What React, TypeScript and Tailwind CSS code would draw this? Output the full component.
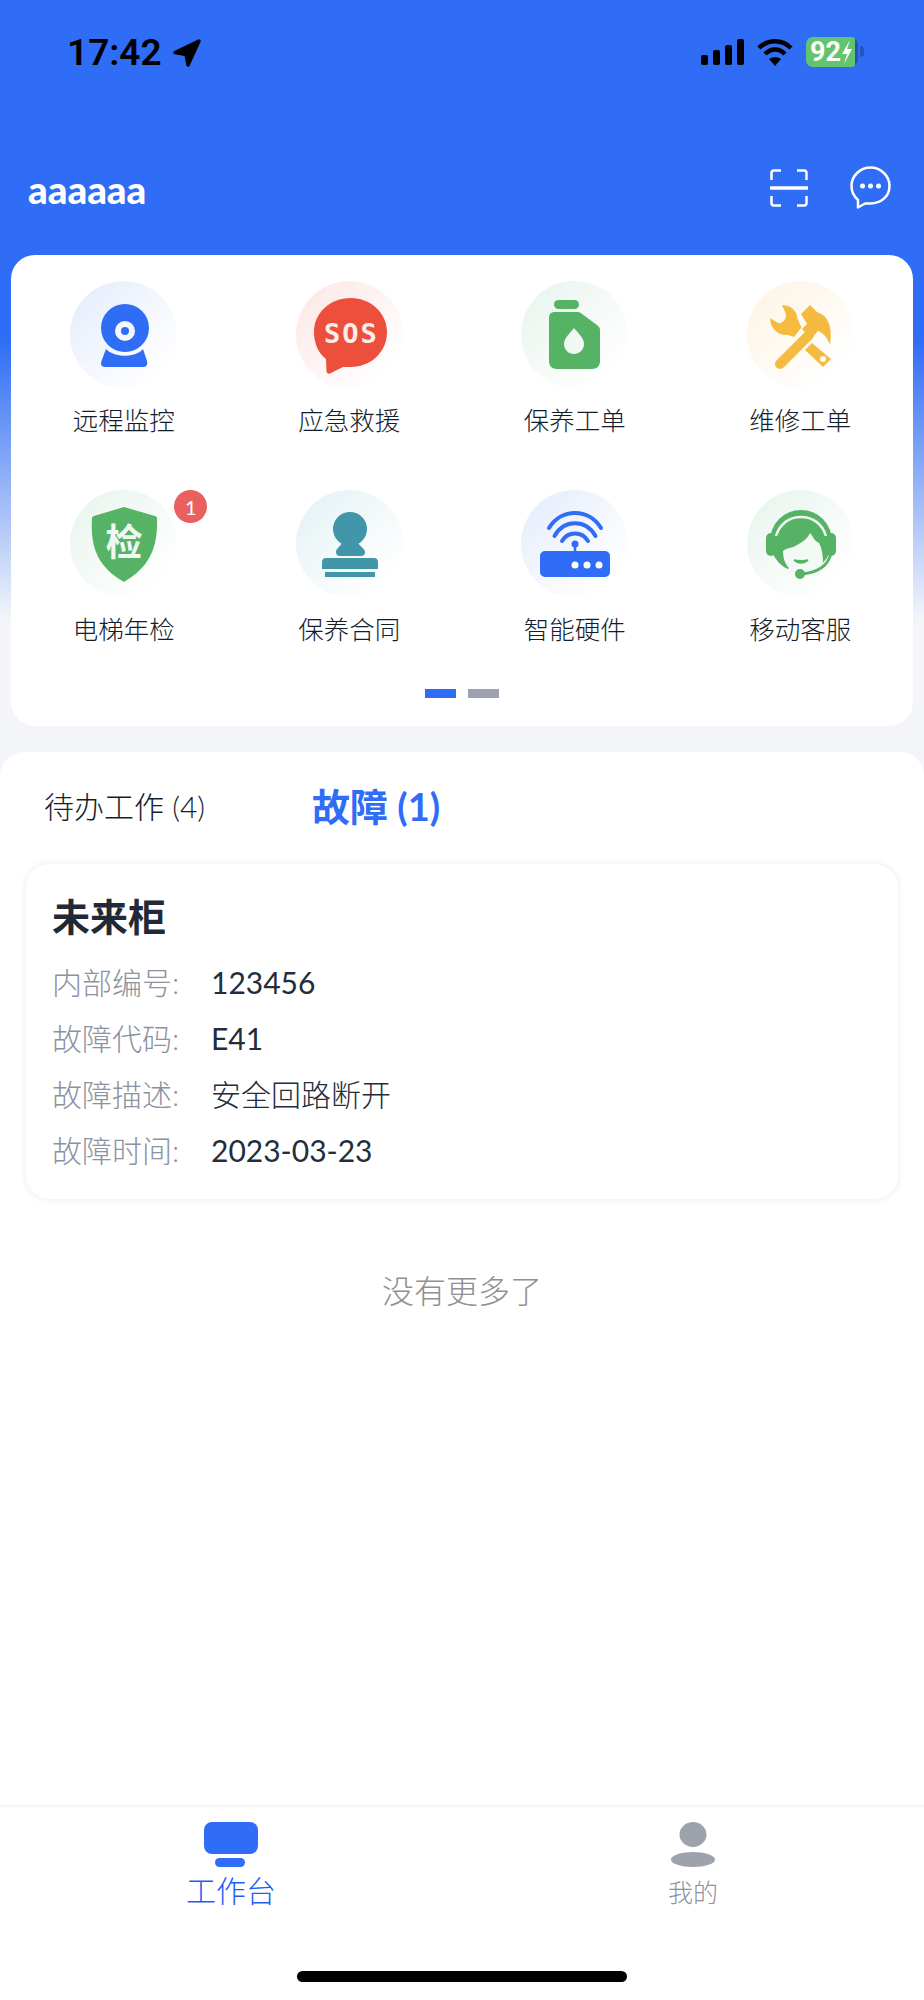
import type { ReactNode } from "react";

const FONT = "font-['Lato','Noto_Sans_CJK_SC',sans-serif]";

function CameraIcon() {
  return (
    <svg viewBox="0 0 107 107" className="h-full w-full">
      <circle cx="55" cy="47" r="24" fill="#2f6df6" />
      <circle cx="55" cy="50" r="10" fill="#f4f7fe" />
      <circle cx="55" cy="50" r="4" fill="#2f6df6" />
      <path
        d="M36 68 C44 77 66 77 73 68 L77 80 C78 84 76 86 73 86 L36 86 C32 86 30 84 31.500 80 Z"
        fill="#2f6df6"
      />
    </svg>
  );
}

function SosIcon() {
  return (
    <svg viewBox="0 0 107 107" className="h-full w-full">
      <path
        d="M54.500 17 C75 17 91 32 91 51 C91 71 75 86 54.500 86 L47 86 L34 92.500 C32 93 30.500 92 30.500 90 L30 78 C22 72 18 62 18 51 C18 32 34 17 54.500 17 Z"
        fill="#ec503c"
      />
      <text
        x="55.500"
        y="62"
        textAnchor="middle"
        fill="#fbeeea"
        fontSize="27"
        fontWeight="700"
        letterSpacing="2"
        fontFamily="'DejaVu Sans Mono', monospace"
      >
        SOS
      </text>
    </svg>
  );
}

function BottleIcon() {
  return (
    <svg viewBox="0 0 107 107" className="h-full w-full">
      <rect x="33" y="19" width="25" height="9" rx="4.500" fill="#56b366" />
      <path
        d="M34 31 L56 31 C58 31 59.500 31.500 61 33 L76 44 C78 45.500 79 47 79 49 L79 80 C79 85 76 88 71 88 L36 88 C31 88 28 85 28 80 L28 37 C28 33 30 31 34 31 Z"
        fill="#56b366"
      />
      <path d="M53 47 C57 52 63 57 63 63 C63 69 58 73 53 73 C48 73 43 69 43 63 C43 57 49 52 53 47 Z" fill="#f1f8f3" />
    </svg>
  );
}

function ToolsIcon() {
  return (
    <svg viewBox="0 0 107 107" className="h-full w-full" fill="#f5bb41">
      <path d="M35 24 C42 24 50 28 50.500 38 L54.500 46.500 L47 56 L41 54 C31 55 23 47 23 37 L31 42 C35 43 40 38 39 33 Z" />
      <path d="M63 24 L70 31 C80 34 86 44 83 64 C80 56 76 52 71 50 L64 58 L55 48 L60 43 L54 33 Z" />
      <path d="M33 83 L62 54" stroke="#f5bb41" strokeWidth="10" strokeLinecap="round" />
      <path d="M65 62 L84 78 L76 86 L58 69 Z" />
      <circle cx="76" cy="78" r="3" fill="#fffaf0" />
    </svg>
  );
}

function ShieldIcon() {
  return (
    <svg viewBox="0 0 107 107" className="h-full w-full">
      <path
        d="M54 17 L85 26 C86.500 26.500 87 27 87 29 C88 60 78 78 54 92 C30 78 20 60 22 29 C22 27 22.500 26.500 24 26 Z"
        fill="#56b366"
      />
      <text
        x="54"
        y="66"
        textAnchor="middle"
        fill="#f1f8f3"
        fontSize="37"
        fontWeight="700"
        fontFamily="'Noto Sans CJK SC', sans-serif"
      >
        检
      </text>
    </svg>
  );
}

function StampIcon() {
  return (
    <svg viewBox="0 0 107 107" className="h-full w-full" fill="#4196a9">
      <circle cx="54" cy="39" r="17" />
      <path d="M47 50 L61 50 C62 56 69 58 69 62 C69 65 67 66 65 66 L44 66 C42 66 40 65 40 62 C40 58 46 56 47 50 Z" />
      <path d="M30 68 L78 68 C81 68 82 70 82 72 L82 79 L26 79 L26 72 C26 70 27 68 30 68 Z" />
      <rect x="29" y="82" width="50" height="5" />
    </svg>
  );
}

function RouterIcon() {
  return (
    <svg viewBox="0 0 107 107" className="h-full w-full">
      <g fill="none" stroke="#2f6df6" strokeWidth="4" strokeLinecap="round">
        <path d="M28 38 C40 18 68 18 80 38" />
        <path d="M33.500 46 C43 29 65 29 74.500 46" />
        <path d="M41 51 C47 41 61 41 67 51" />
      </g>
      <path d="M54 54 L54 62" stroke="#2f6df6" strokeWidth="2.500" />
      <circle cx="54" cy="54" r="3.500" fill="#2f6df6" />
      <rect x="19" y="61" width="70" height="26" rx="5" fill="#2f6df6" />
      <circle cx="54" cy="75" r="3.500" fill="#fff" />
      <circle cx="66" cy="75" r="3.500" fill="#fff" />
      <circle cx="78" cy="75" r="3.500" fill="#fff" />
    </svg>
  );
}

function AgentIcon() {
  return (
    <svg viewBox="0 0 107 107" className="h-full w-full">
      <circle cx="54" cy="51" r="31" fill="#56b366" />
      <rect x="19" y="43" width="10" height="23" rx="5" fill="#56b366" />
      <rect x="79" y="43" width="10" height="23" rx="5" fill="#56b366" />
      <path d="M29 46 C33 33 43 27 54 27 C65 27 75 33 79 46" fill="none" stroke="#eef7f1" strokeWidth="2.500" />
      <path
        d="M36 61 C41 57 46 58 50 55 C56 52 61 48 63 43 C66 46 67 51 72 53 C75 58 76 66 76 72 L72 86 L34 86 L42 78 C38 74 36 68 36 61 Z"
        fill="#f3f9f5"
      />
      <path d="M47 70 C51 74 57 74 61 70 C58 71 50 71 47 70 Z" fill="#56b366" stroke="#56b366" strokeWidth="1.500" />
      <path d="M53 84 C70 83 81 77 84 63" fill="none" stroke="#56b366" strokeWidth="3" />
      <circle cx="53" cy="84" r="5" fill="#56b366" />
    </svg>
  );
}

interface Entry {
  label: string;
  tint: string;
  icon: ReactNode;
  badge?: number;
}

const ENTRIES: Entry[] = [
  { label: "远程监控", tint: "from-[#e3ebfb]", icon: <CameraIcon /> },
  { label: "应急救援", tint: "from-[#fbe6e4]", icon: <SosIcon /> },
  { label: "保养工单", tint: "from-[#e7f4ec]", icon: <BottleIcon /> },
  { label: "维修工单", tint: "from-[#fdf4e3]", icon: <ToolsIcon /> },
  { label: "电梯年检", tint: "from-[#e7f4ec]", icon: <ShieldIcon />, badge: 1 },
  { label: "保养合同", tint: "from-[#e3f1f4]", icon: <StampIcon /> },
  { label: "智能硬件", tint: "from-[#e3ebfb]", icon: <RouterIcon /> },
  { label: "移动客服", tint: "from-[#e7f4ec]", icon: <AgentIcon /> },
];

// The third value is Chinese: the CJK face runs heavier than Lato, so it takes the light weight.
const FAULT_ROWS = [
  { name: "内部编号:", value: "123456", weight: "font-normal" },
  { name: "故障代码:", value: "E41", weight: "font-normal" },
  { name: "故障描述:", value: "安全回路断开", weight: "font-light" },
  { name: "故障时间:", value: "2023-03-23", weight: "font-normal" },
];

function StatusBar() {
  return (
    <div className="flex h-[100px] shrink-0 items-start justify-between pt-[37px] pl-[67px] pr-[60px]">
      <div className="flex items-center gap-[10px]">
        <span className="font-['Roboto',sans-serif] text-[37px] leading-[32px] font-semibold text-black">17:42</span>
        <svg viewBox="0 0 30 30" className="h-[30px] w-[30px]">
          <path d="M27 3 L3 14.500 L14 16.500 L16 27 Z" fill="#000" stroke="#000" strokeWidth="3.500" strokeLinejoin="round" />
        </svg>
      </div>
      <div className="flex items-start">
        <div className="mt-[2px] flex h-[26px] items-end gap-[5px]">
          <div className="h-[10px] w-[7px] rounded-[2px] bg-black" />
          <div className="h-[15px] w-[7px] rounded-[2px] bg-black" />
          <div className="h-[20px] w-[7px] rounded-[2px] bg-black" />
          <div className="h-[26px] w-[7px] rounded-[2px] bg-black" />
        </div>
        <svg viewBox="0 0 36 28" className="mt-[1px] ml-[13px] h-[28px] w-[36px]">
          <g fill="none" stroke="#000" strokeWidth="4.500">
            <path d="M2 10 C11 1 25 1 34 10" />
            <path d="M8 16 C14 10 22 10 28 16" />
          </g>
          <path d="M12 21 C15 18.500 21 18.500 24 21 L18 28 Z" fill="#000" />
        </svg>
        <div className="ml-[13px] flex h-[30px] w-[52px] items-center overflow-hidden rounded-[7px] bg-[#62c46c]">
          <span className="pl-[4px] font-['Roboto',sans-serif] text-[27px] leading-none font-bold text-white">92</span>
          <svg viewBox="0 0 12 24" className="h-[24px] w-[12px]">
            <path d="M9 0 L1 14 L6 14 L3 24 L11 9 L6 9 Z" fill="#fff" />
          </svg>
          <div className="ml-auto h-full w-[3px] bg-[#2553b5]" />
        </div>
        <div className="mt-[9px] ml-[2px] h-[11px] w-[4px] rounded-r-full bg-[#2553b5]" />
      </div>
    </div>
  );
}

function Header() {
  return (
    <div className="flex h-[155px] shrink-0 items-start justify-between pr-[33px] pl-[28px] pt-[64px]">
      <span className={`${FONT} text-[38.500px] leading-[50px] font-black text-white`}>aaaaaa</span>
      <div className="mt-[2px] flex items-start">
        <svg viewBox="0 0 38 38" className="mt-[3px] h-[38px] w-[38px]" fill="none" stroke="#fff" strokeWidth="2.500">
          <path d="M11 1.500 L4 1.500 C2.500 1.500 1.500 2.500 1.500 4 L1.500 11" />
          <path d="M27 1.500 L34 1.500 C35.500 1.500 36.500 2.500 36.500 4 L36.500 11" />
          <path d="M11 36.500 L4 36.500 C2.500 36.500 1.500 35.500 1.500 34 L1.500 27" />
          <path d="M27 36.500 L34 36.500 C35.500 36.500 36.500 35.500 36.500 34 L36.500 27" />
          <path d="M0 19 L38 19" strokeWidth="3.500" />
        </svg>
        <svg viewBox="0 0 41 43" className="ml-[42px] h-[43px] w-[41px]">
          <path
            d="M20.500 1.500 C31 1.500 39.500 10 39.500 20 C39.500 30.500 31 37.500 20.500 37.500 L15 37.500 L8 41.500 L8 34 C4 30.500 1.500 26 1.500 20 C1.500 10 10 1.500 20.500 1.500 Z"
            fill="none"
            stroke="#fff"
            strokeWidth="2.500"
            strokeLinejoin="round"
          />
          <circle cx="12.500" cy="20" r="2.500" fill="#fff" />
          <circle cx="20.500" cy="20" r="2.500" fill="#fff" />
          <circle cx="28.500" cy="20" r="2.500" fill="#fff" />
        </svg>
      </div>
    </div>
  );
}

function EntryGrid() {
  return (
    <div className="mx-[11px] h-[471px] shrink-0 rounded-[24px] bg-white pt-[26px]">
      <div className="grid grid-cols-4 gap-y-[52px]">
        {ENTRIES.map((entry) => (
          <div key={entry.label} className="flex flex-col items-center">
            <div className={`relative h-[107px] w-[107px] rounded-full bg-linear-to-br ${entry.tint} to-white to-85%`}>
              {entry.icon}
              {entry.badge != null && (
                <span className={`${FONT} absolute top-0 left-[104px] flex h-[33px] w-[33px] items-center justify-center rounded-full bg-[#e86060] text-[20px] text-white`}>
                  {entry.badge}
                </span>
              )}
            </div>
            <span className={`${FONT} mt-[14px] text-[25.500px] leading-[36px] font-light text-[#141e2b]`}>{entry.label}</span>
          </div>
        ))}
      </div>
      <div className="mt-[42px] flex justify-center gap-[12px]">
        <div className="h-[9px] w-[31px] bg-[#2f6df6]" />
        <div className="h-[9px] w-[31px] bg-[#9ea2b0]" />
      </div>
    </div>
  );
}

function FaultCard() {
  return (
    <div className="mx-[26px] h-[335px] rounded-[24px] bg-white pt-[30px] pl-[26px] shadow-[0_0_5px_3px_rgba(0,0,0,0.045)]">
      <div className="text-[38px] leading-[44px] font-bold text-[#1f2a36]">未来柜</div>
      <div className="mt-[16px] flex flex-col">
        {FAULT_ROWS.map((row) => (
          <div key={row.name} className="flex h-[56px] items-center text-[30px]">
            <span className="w-[159px] font-light text-[#8c92a0]">{row.name}</span>
            <span className={`${row.weight} text-[#232d3b]`}>{row.value}</span>
          </div>
        ))}
      </div>
    </div>
  );
}

function TabBar() {
  return (
    <div className="flex h-[195px] shrink-0 flex-col justify-between border-t-2 border-[#f6f6f7] bg-white pt-[15px] pb-[18px]">
      <div className="grid grid-cols-2">
        <div className="flex flex-col items-center">
          <svg viewBox="0 0 54 45" className="h-[45px] w-[54px]" fill="#2f6df6">
            <rect x="0" y="0" width="54" height="32" rx="8" />
            <rect x="11" y="36" width="30" height="9" rx="4.500" />
          </svg>
          <span className="mt-[5px] text-[30px] leading-[36px] font-light text-[#1f5ff0]">工作台</span>
        </div>
        <div className="flex flex-col items-center">
          <svg viewBox="0 0 44 45" className="h-[45px] w-[44px]" fill="#9ea2ad">
            <ellipse cx="22" cy="12.500" rx="13.500" ry="12.500" />
            <ellipse cx="22" cy="37.500" rx="22" ry="7.500" />
          </svg>
          <span className="mt-[7px] text-[25px] leading-[36px] font-light text-[#8c92a0]">我的</span>
        </div>
      </div>
      <div className="mx-auto h-[11px] w-[330px] rounded-full bg-black" />
    </div>
  );
}

export default function App() {
  return (
    <div className={`${FONT} flex h-[2000px] w-[924px] flex-col overflow-hidden bg-[linear-gradient(#2f6df6_0px,#2f6df6_340px,#f3f5f9_620px)]`}>
      <StatusBar />
      <Header />
      <EntryGrid />
      <div className="mt-[26px] flex min-h-0 flex-1 flex-col rounded-t-[24px] bg-white">
        <div className="flex h-[112px] shrink-0 items-start pt-[33px] pl-[44px]">
          <span className="w-[268px] text-[30px] leading-[42px] font-light text-[#141e2b]">待办工作 (4)</span>
          <span className="text-[38px] leading-[42px] font-bold text-[#2f6df6]">故障 (1)</span>
        </div>
        <FaultCard />
        <div className="mt-[70px] text-center text-[32px] leading-[44px] font-light text-[#909090]">没有更多了</div>
      </div>
      <TabBar />
    </div>
  );
}
